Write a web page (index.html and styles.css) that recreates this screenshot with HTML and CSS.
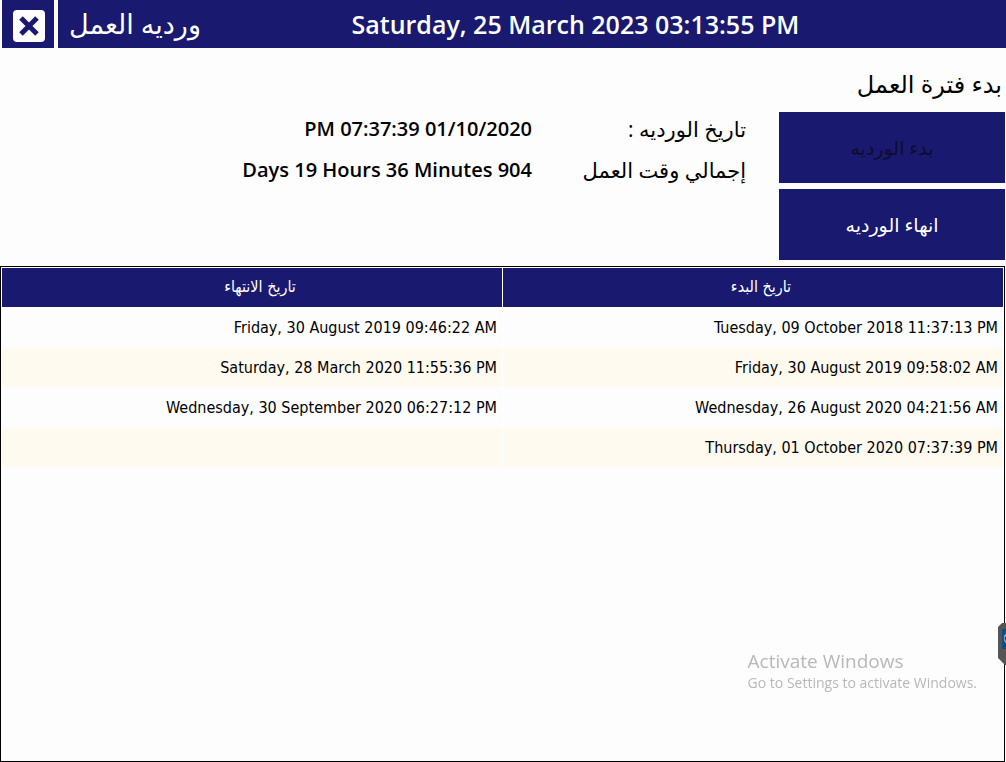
FILE: index.html
```
<!DOCTYPE html>
<html lang="ar" dir="rtl">
<head>
<meta charset="utf-8">
<meta name="viewport" content="width=device-width, initial-scale=1">
<title>ورديه العمل</title>
<link rel="stylesheet" href="styles.css">
</head>
<body class="app">
<header class="topbar">
  <div class="topbar-main">
    <time class="clock" dir="ltr">Saturday, 25 March 2023 03:13:55 PM</time>
    <h1 class="title">ورديه العمل</h1>
  </div>
  <button class="close" type="button" aria-label="إغلاق">
    <svg class="close-icon" viewBox="0 0 32 32" aria-hidden="true">
      <rect width="32" height="32" rx="4" fill="#fff"/>
      <path d="M8 8 24 24M24 8 8 24" stroke="#191970" stroke-width="5"/>
    </svg>
  </button>
</header>
<main class="content">
  <h2 class="section-title">بدء فترة العمل</h2>
  <section class="shift">
    <div class="actions">
      <button class="action" type="button" disabled>بدء الورديه</button>
      <button class="action" type="button">انهاء الورديه</button>
    </div>
    <dl class="facts">
      <dt>تاريخ الورديه :</dt>
      <dd>01/10/2020 07:37:39 PM</dd>
      <dt>إجمالي وقت العمل</dt>
      <dd>904 Days 19 Hours 36 Minutes</dd>
    </dl>
  </section>
  <section class="grid-frame">
    <table class="shifts">
      <thead>
        <tr><th scope="col">تاريخ البدء</th><th scope="col">تاريخ الانتهاء</th></tr>
      </thead>
      <tbody>
        <tr><td>Tuesday, 09 October 2018 11:37:13 PM</td><td>Friday, 30 August 2019 09:46:22 AM</td></tr>
        <tr><td>Friday, 30 August 2019 09:58:02 AM</td><td>Saturday, 28 March 2020 11:55:36 PM</td></tr>
        <tr><td>Wednesday, 26 August 2020 04:21:56 AM</td><td>Wednesday, 30 September 2020 06:27:12 PM</td></tr>
        <tr><td>Thursday, 01 October 2020 07:37:39 PM</td><td></td></tr>
      </tbody>
    </table>
  </section>
</main>
<aside class="activation" dir="ltr">
  <p class="activation-title">Activate Windows</p>
  <p class="activation-text">Go to Settings to activate Windows.</p>
</aside>
<div class="side-tab" dir="ltr">
  <svg class="side-tab-icon" viewBox="0 0 8 42" aria-hidden="true">
    <path d="M8 0H4L0 4V35L7 42H8Z" fill="#555"/>
    <path d="M4 6H8V26H4Z" fill="#0b4f86"/>
    <path d="M8 11C5 12 5 18 8 20V18C6 17 6 14 8 13Z" fill="#9fb3c4"/>
  </svg>
</div>
</body>
</html>
```
FILE: styles.css
```
* {
  box-sizing: border-box;
}

.app {
  margin: 0;
  min-height: 100vh;
  display: flex;
  flex-direction: column;
  background: #fdfdfd;
  color: #000;
  font-family: "Open Sans", "DejaVu Sans", sans-serif;
}

.topbar {
  display: flex;
  gap: 4px;
  height: 48px;
  padding-left: 2px;
}

.topbar-main {
  flex: 1;
  display: flex;
  align-items: center;
  padding: 0 56px 0 11px;
  background: #191970;
  color: #fff;
}

.clock {
  flex: 1;
  text-align: center;
  font-size: 25px;
  font-weight: 600;
  white-space: nowrap;
}

.title {
  margin: 0;
  font-size: 27px;
  font-weight: 400;
  line-height: 48px;
  white-space: nowrap;
}

.close {
  width: 52px;
  padding: 4px 0 0 2px;
  border: 0;
  background: #191970;
  display: grid;
  place-items: center;
}

.close-icon {
  display: block;
  width: 32px;
  height: 32px;
}

.content {
  flex: 1;
  display: flex;
  flex-direction: column;
  padding-right: 1px;
}

.section-title {
  margin: 0;
  padding: 16px 3px 8px;
  font-size: 24px;
  font-weight: 400;
  line-height: 40px;
}

.shift {
  display: flex;
  gap: 33px;
  padding-bottom: 6px;
}

.actions {
  width: 226px;
  display: flex;
  flex-direction: column;
  gap: 6px;
}

.action {
  height: 71px;
  padding: 0;
  border: 0;
  background: #191970;
  color: #fff;
  font-family: "Open Sans", "DejaVu Sans", sans-serif;
  font-size: 19px;
  font-weight: 400;
}

.action:disabled {
  color: #0d0d2c;
}

.facts {
  flex: 1;
  display: grid;
  grid-template-columns: 214px 1fr;
  grid-auto-rows: 41px;
  align-content: start;
  margin: 0;
  font-size: 21px;
  line-height: 34px;
}

.facts dd {
  margin: 0;
  font-size: 20px;
  font-weight: 600;
}

.grid-frame {
  flex: 1;
  border: 1px solid #000;
  padding: 1px;
}

.shifts {
  width: 100%;
  table-layout: fixed;
  border-collapse: collapse;
  font-family: "DejaVu Sans Condensed", "DejaVu Sans", sans-serif;
  font-size: 16px;
}

.shifts th {
  height: 39px;
  padding: 0 0 0 16px;
  background: #191970;
  color: #fff;
  font-weight: 400;
  line-height: 24px;
  border-bottom: 1px solid #fdfdfd;
}

.shifts th:last-child,
.shifts td:last-child {
  border-right: 1px solid #fff;
}

.shifts td {
  height: 40px;
  padding: 1px 5px 0;
  line-height: 24px;
  border-bottom: 1px solid #fdfdfd;
}

.shifts tbody tr:nth-child(even) {
  background: #fffaf0;
}

.activation {
  position: fixed;
  right: 29px;
  bottom: 69px;
  color: #b8b8b8;
}

.activation p {
  margin: 0;
  white-space: nowrap;
}

.activation-title {
  font-size: 19px;
  line-height: 24px;
}

.activation-text {
  font-size: 14px;
  line-height: 20px;
}

.side-tab {
  position: fixed;
  right: 0;
  bottom: 97px;
}

.side-tab-icon {
  display: block;
  width: 8px;
  height: 42px;
}
```
